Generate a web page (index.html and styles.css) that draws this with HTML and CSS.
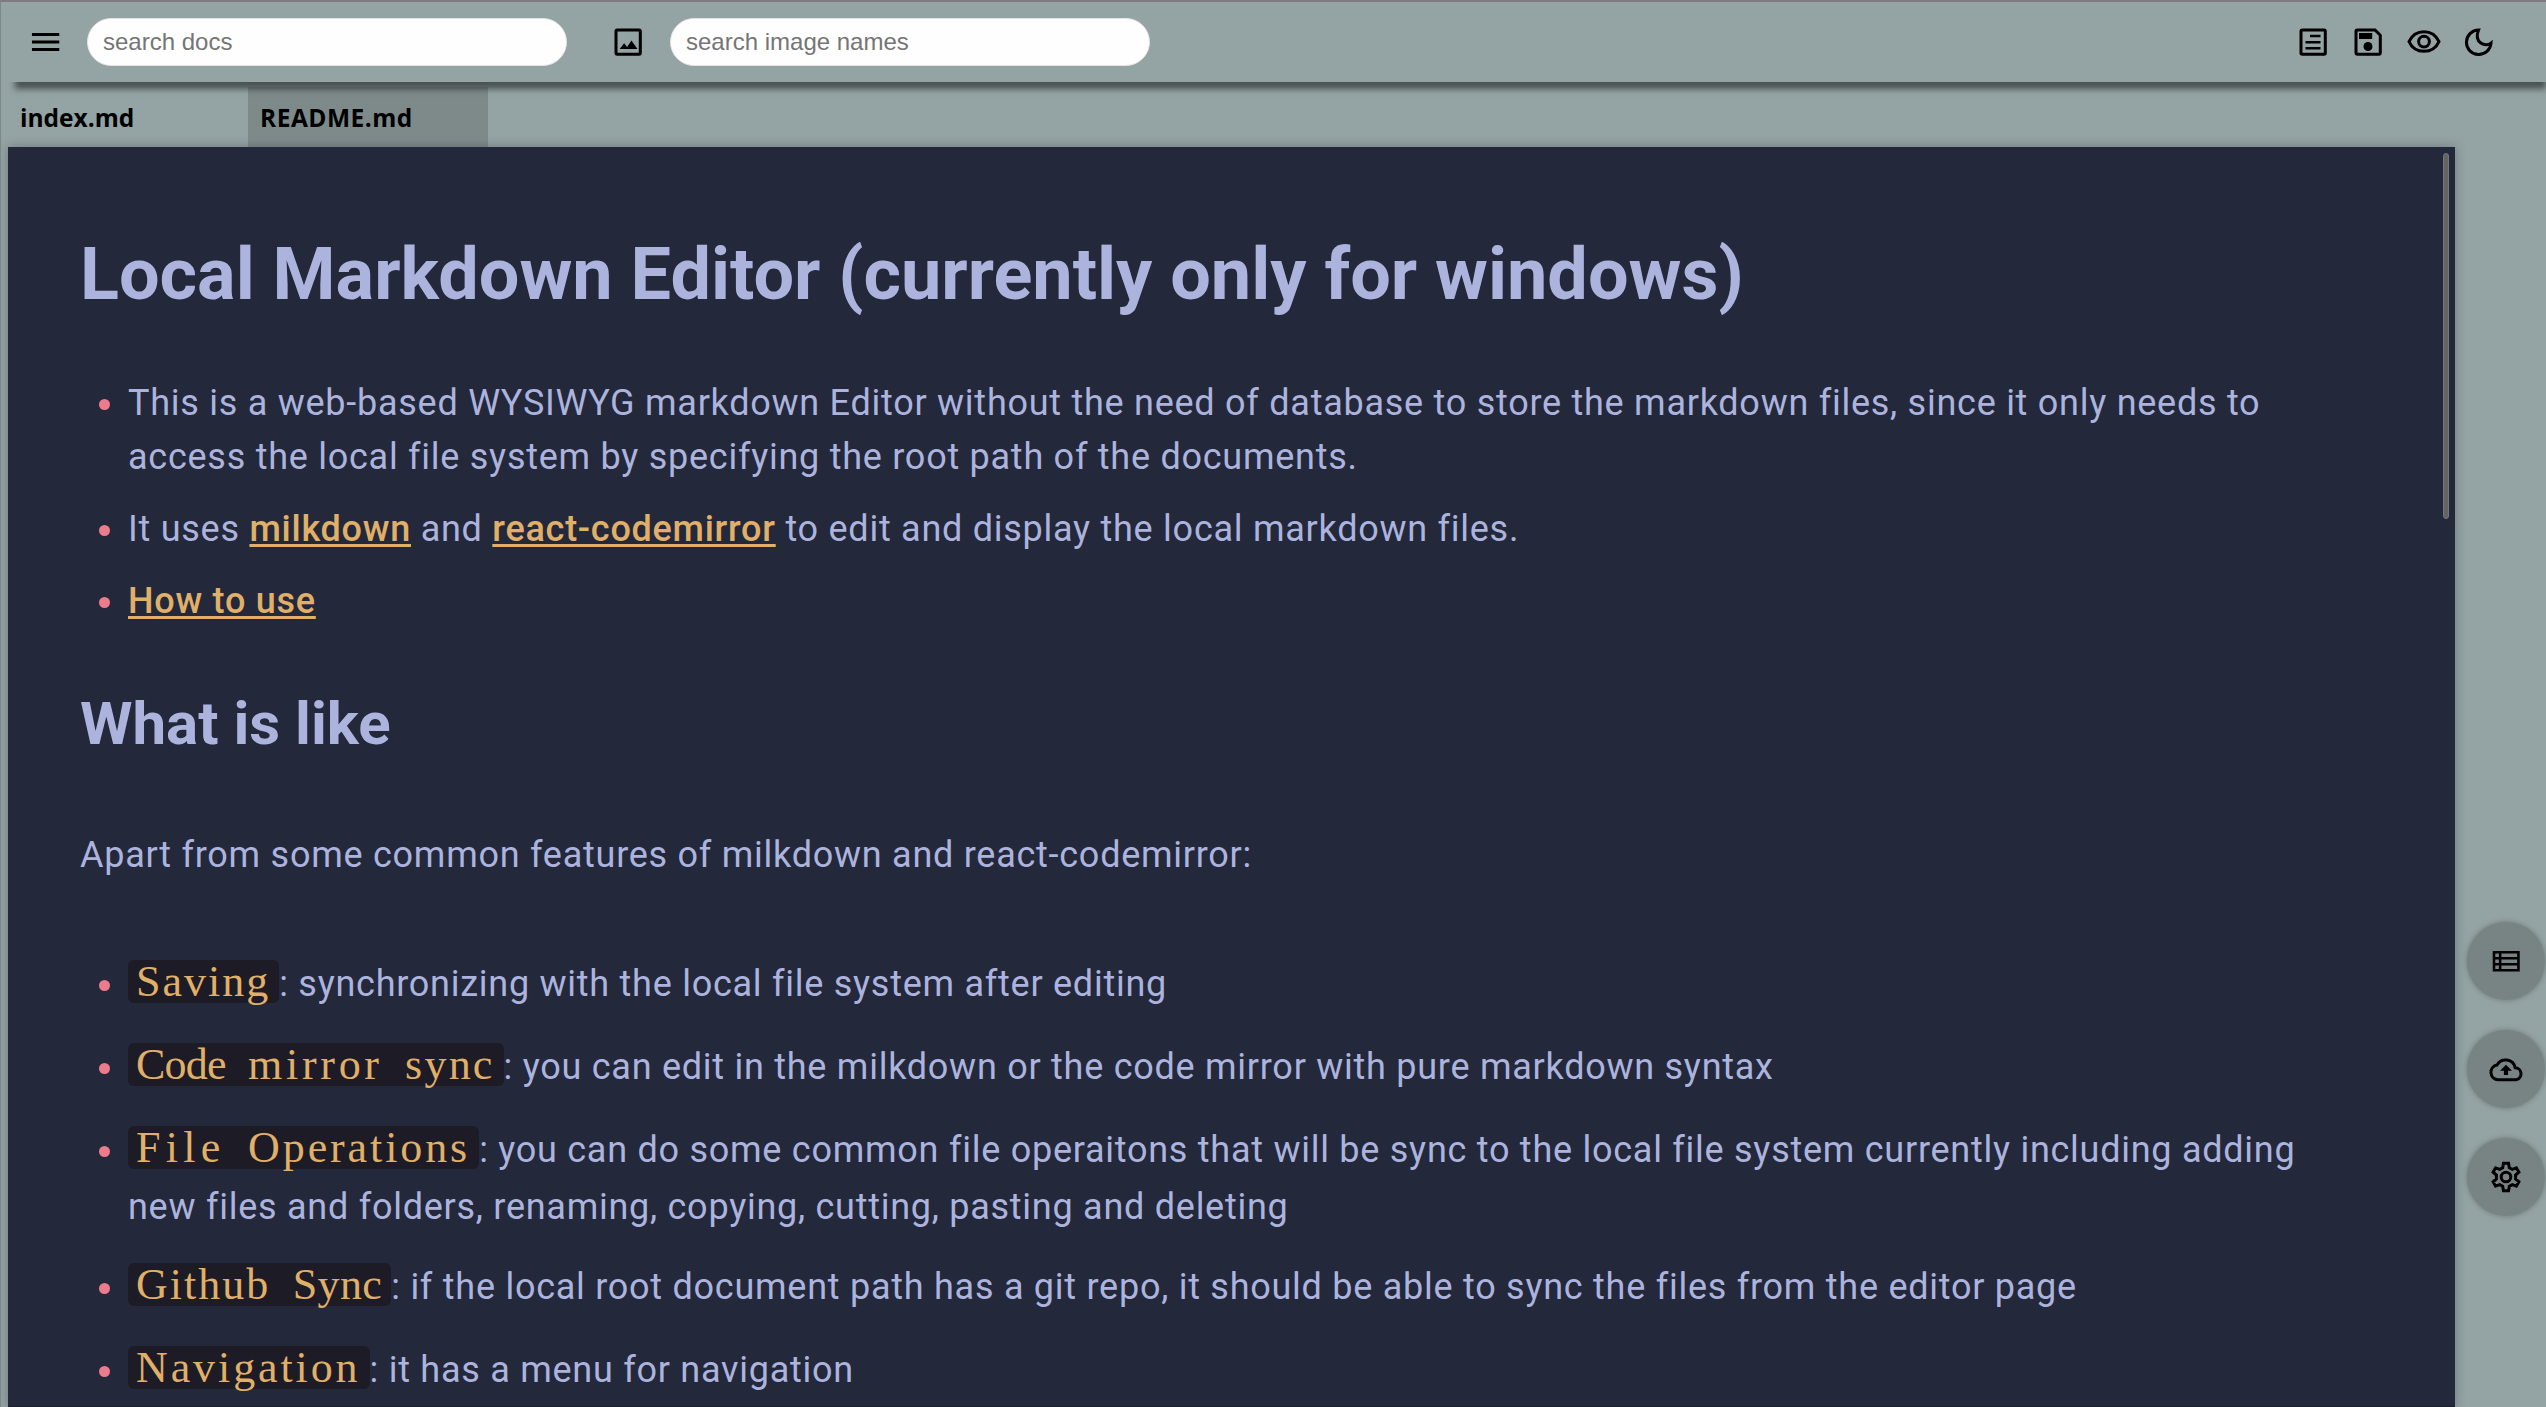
FILE: index.html
```html
<!DOCTYPE html>
<html lang="en">
<head>
<meta charset="utf-8">
<title>README.md</title>
<link rel="stylesheet" href="styles.css">
</head>
<body>
<header class="topbar">
  <svg class="icon menu-icon" viewBox="0 0 24 24"><path d="M3.300 7h18.200M3.300 12h18.200M3.300 17h18.200"/></svg>
  <input class="search" type="text" placeholder="search docs">
  <svg class="icon image-icon" viewBox="0 0 24 24"><rect x="4" y="4" width="16.200" height="16.200" rx=".8"/><path class="solid" d="M6.500 16.700l2.900-3.900 2 2.500 2.900-4.300 4 5.700z"/></svg>
  <input class="search" type="text" placeholder="search image names">
  <nav class="actions">
    <svg class="icon" viewBox="0 0 24 24"><rect x="4" y="4" width="16.200" height="16.200" rx=".8"/><path d="M10 8h7M7 12.200h10M7 16.200h10" stroke-width="1.600"/></svg>
    <svg class="icon" viewBox="0 0 24 24"><path d="M4.800 4h11.900l3.500 3.500v11.900a.8.8 0 0 1-.8.800H4.800a.8.800 0 0 1-.8-.8V4.800a.8.800 0 0 1 .8-.8z"/><path class="solid" d="M6 6h8.800v4H6z"/><circle class="solid" cx="12" cy="15" r="3"/></svg>
    <svg class="icon" viewBox="0 0 24 24"><path d="M2 11.700C4 7.300 7.700 5.100 12 5.100s8 2.200 10 6.600c-2 4.300-5.700 6.500-10 6.500S4 16 2 11.700z"/><circle cx="12" cy="11.700" r="3.600"/></svg>
    <svg class="icon" viewBox="0 0 24 24"><path d="M11.700 4A8.200 8.200 0 1 0 20 12.800C16.500 15.700 8.200 12.500 11.700 4z"/></svg>
  </nav>
</header>
<div class="tabs">
  <div class="tab">index.md</div>
  <div class="tab active">README.md</div>
</div>
<main class="workspace">
  <article class="editor">
    <h1>Local Markdown Editor (currently only for windows)</h1>
    <ul class="list">
      <li><p>This is a web-based WYSIWYG markdown Editor without the need of database to store the markdown files, since it only needs to access the local file system by specifying the root path of the documents.</p></li>
      <li><p>It uses <a>milkdown</a> and <a>react-codemirror</a> to edit and display the local markdown files.</p></li>
      <li><p><a>How to use</a></p></li>
    </ul>
    <h2>What is like</h2>
    <p class="para">Apart from some common features of milkdown and react-codemirror:</p>
    <ul class="list features">
      <li><p><code><span class="w-saving">Saving</span></code>: synchronizing with the local file system after editing</p></li>
      <li><p><code><span class="w-code">Code</span> <span class="w-mirror">mirror</span> <span class="w-sync">sync</span></code>: you can edit in the milkdown or the code mirror with pure markdown syntax</p></li>
      <li><p><code><span class="w-file">File</span> <span class="w-long">Operations</span></code>: you can do some common file operaitons that will be sync to the local file system currently including adding new files and folders, renaming, copying, cutting, pasting and deleting</p></li>
      <li><p><code><span class="w-saving">Github</span> <span class="w-Sync">Sync</span></code>: if the local root document path has a git repo, it should be able to sync the files from the editor page</p></li>
      <li><p><code><span class="w-long">Navigation</span></code>: it has a menu for navigation</p></li>
    </ul>
    <div class="scroll-thumb"></div>
  </article>
  <aside class="dock">
    <div class="fab"><svg class="icon" viewBox="0 0 24 24"><path d="M4 6.200h16.300v11.900H4zM4 10.200h16M4 14.100h16M8.100 6v12" stroke-width="1.700"/></svg></div>
    <div class="fab"><svg class="icon" viewBox="0 0 24 24"><path d="M6.400 19.100a4.900 4.900 0 0 1-.4-9.700A6.500 6.500 0 0 1 18.100 11.200a4 4 0 0 1 .8 7.900z" stroke-width="2"/><path class="solid" d="M12 9.100l4 4h-2.600V16h-2.800v-2.900H8z"/></svg></div>
    <div class="fab"><svg class="icon" viewBox="0 0 24 24"><path d="M10.300 2.900h3.400l.5 2.900 2 1.100 2.700-1 1.700 2.900-2.200 1.900v2.600l2.200 1.900-1.700 2.900-2.700-1-2 1.100-.5 2.900h-3.400l-.5-2.900-2-1.100-2.700 1-1.700-2.900 2.200-1.900v-2.600L3.400 8.800l1.700-2.900 2.700 1 2-1.100z"/><circle cx="12" cy="12" r="3.200"/></svg></div>
  </aside>
</main>
</body>
</html>
```
FILE: styles.css
```css
* { box-sizing: border-box; }
body {
  margin: 0;
  width: 2546px;
  height: 1407px;
  overflow: hidden;
  display: flex;
  flex-direction: column;
  background: #94a3a3;
  border-top: 2px solid #7f7a80;
  border-left: 1px solid #7b8788;
  font-family: Roboto, sans-serif;
}
.icon {
  width: 36px;
  height: 36px;
  flex: none;
  fill: none;
  stroke: #000;
  stroke-width: 2;
}
.icon .solid { fill: #000; stroke: none; }
.topbar {
  height: 80px;
  flex: none;
  display: flex;
  align-items: center;
  padding: 0 49px 0 26px;
  background: #94a3a3;
  box-shadow: 7px 14px 6px -7px rgba(0, 0, 0, .5);
}
.search {
  width: 480px;
  height: 48px;
  margin-left: 24px;
  padding: 0 15px;
  border: 1px solid #e8e2e4;
  border-radius: 24px;
  background: #fefefe;
  font: 24px "Liberation Sans", sans-serif;
}
.search::placeholder { color: #757575; }
.image-icon { margin-left: 43px; }
.actions { margin-left: auto; display: flex; gap: 19.500px; }
.tabs {
  height: 65px;
  flex: none;
  display: flex;
  padding-top: 5px;
  gap: 8px;
  font: 700 24.500px "Open Sans", "Noto Sans", sans-serif;
  color: #000;
}
.tab { width: 239px; padding-left: 19px; line-height: 61px; height: 60px; }
.tab.active { width: 240px; padding-left: 12px; background: rgba(0, 0, 0, .15); letter-spacing: .5px; }
.workspace { flex: 1; min-height: 0; display: flex; padding-left: 7px; }
.editor {
  position: relative;
  width: 2447px;
  padding: 86px 115px 0 72px;
  overflow: hidden;
  background: #24283b;
  border-bottom: 1px solid #1b1d29;
  color: #acb4de;
  box-shadow: 0 0 10px rgba(60, 60, 80, .4);
}
.editor h1 { margin: 0; font-size: 72px; font-weight: 700; line-height: 84px; }
.editor h2 { margin: 60px 0 0; font-size: 60px; font-weight: 700; line-height: 72px; }
.editor p { margin: 0; font-size: 36px; line-height: 54px; letter-spacing: .74px; }
.editor .list {
  list-style: none;
  margin: 59px 0 0;
  padding: 0 0 0 19px;
  display: flex;
  flex-direction: column;
  gap: 18px;
}
.list li { display: grid; grid-template-columns: 11px 1fr; column-gap: 18px; }
.list li::before {
  content: "";
  width: 11px;
  height: 11px;
  margin-top: 23px;
  border-radius: 50%;
  background: #ec7b8c;
}
.features li::before { margin-top: 31px; }
a { color: #e0af68; font-weight: 500; text-decoration: underline; text-decoration-thickness: 3px; text-underline-offset: 3px; }
.editor .para { margin-top: 68px; }
.editor .features { margin-top: 67px; }
code {
  display: inline-block;
  margin: 11px 0;
  padding: 0 9px 0 8px;
  border-radius: 6px;
  background: #1c1b26;
  color: #e0af68;
  font: 44px/43px "Liberation Serif", serif;
  letter-spacing: 0;
  word-spacing: 11.400px;
  white-space: nowrap;
}
.w-saving { letter-spacing: 2px; }
.w-code { letter-spacing: -.8px; }
.w-mirror { letter-spacing: 3.700px; }
.w-sync { letter-spacing: 2.200px; }
.w-file { letter-spacing: 5.300px; }
.w-long { letter-spacing: 2.900px; }
.w-Sync { letter-spacing: .4px; }
.scroll-thumb {
  position: absolute;
  top: 6px;
  right: 6px;
  width: 6px;
  height: 366px;
  border: 1px solid #6b7888;
  border-radius: 3px;
  background: #66645f;
}
.dock {
  flex: 1;
  display: flex;
  flex-direction: column;
  align-items: flex-end;
  gap: 31px;
  padding: 775px 1px 0 0;
}
.fab {
  width: 78px;
  height: 78px;
  flex: none;
  display: grid;
  place-items: center;
  border-radius: 50%;
  background: #788484;
  box-shadow: 0 0 4px 1px #788484;
}
.fab + .fab { margin-top: -1px; }
```
